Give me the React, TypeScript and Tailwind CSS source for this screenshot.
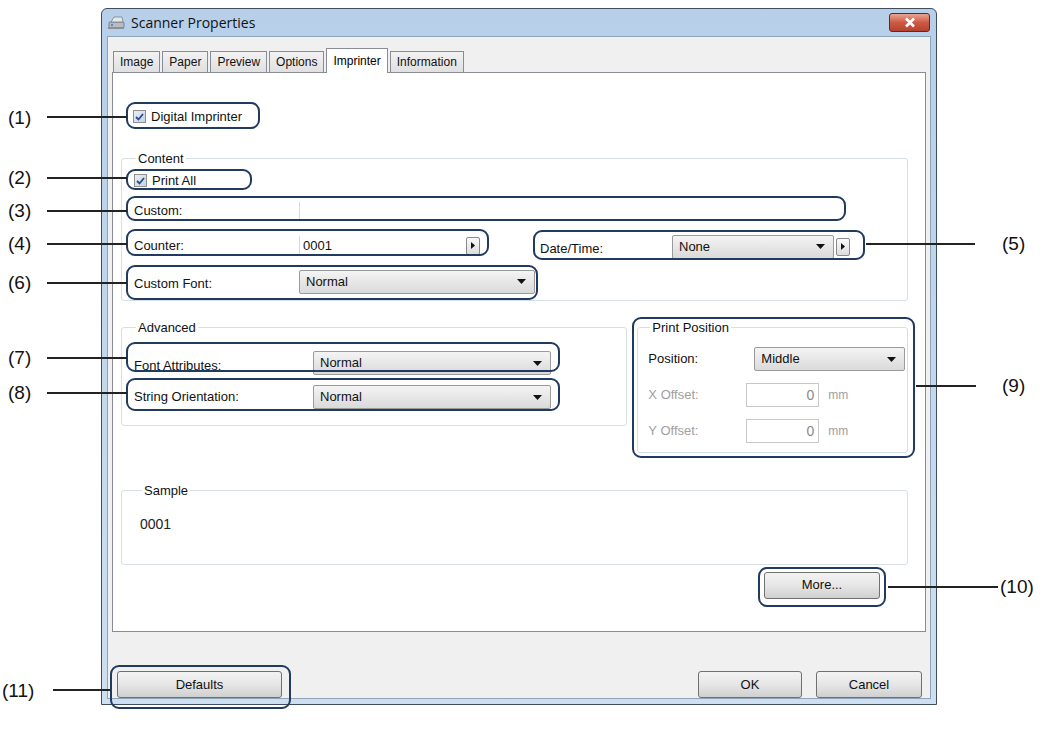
import React from "react"

const font = { fontFamily: '"Liberation Sans", Arial, sans-serif' }

function Caret() {
  return (
    <svg width="9" height="5" viewBox="0 0 9 5" className="shrink-0">
      <path d="M0 0h9L4.5 5z" fill="#111" />
    </svg>
  )
}

function Select({ value, w }: { value: string; w: string }) {
  return (
    <div className={`${w} h-[24px] flex items-center justify-between pl-[6px] pr-[8px] border border-[#9a9a9a] rounded-[2px] bg-gradient-to-b from-[#f4f4f4] to-[#dadada] text-[13px] text-[#111]`}>
      <span>{value}</span>
      <Caret />
    </div>
  )
}

function ArrowBtn() {
  return (
    <div className="w-[14px] h-[18px] flex items-center justify-center border border-[#8a8a8a] rounded-[2px] bg-gradient-to-b from-[#fafafa] to-[#dedede]">
      <svg width="4" height="7" viewBox="0 0 4 7">
        <path d="M0 0l4 3.5L0 7z" fill="#111" />
      </svg>
    </div>
  )
}

function Check({ label }: { label: string }) {
  return (
    <div className="flex items-center gap-[5px] text-[13px] text-[#111]">
      <div className="w-[13px] h-[13px] border border-[#8e8f8f] bg-gradient-to-br from-[#e8eef6] to-[#c6d3e2] flex items-center justify-center">
        <svg width="9" height="8" viewBox="0 0 9 8">
          <path d="M1 4l2.5 2.5L8 1" stroke="#2b4a8b" strokeWidth="1.8" fill="none" />
        </svg>
      </div>
      <span>{label}</span>
    </div>
  )
}

function Btn({ label, w }: { label: string; w: string }) {
  return (
    <div className={`${w} h-[27px] flex items-center justify-center border border-[#707070] rounded-[3px] bg-gradient-to-b from-[#f3f3f3] via-[#e6e6e6] to-[#d0d0d0] text-[13px] text-[#111]`}>
      {label}
    </div>
  )
}

function Group({ title, className, children }: { title: string; className: string; children?: React.ReactNode }) {
  return (
    <fieldset className={`border border-[#d5dfe5] rounded-[3px] ${className}`}>
      <legend className="ml-[2px] px-[2px] text-[13px] text-[#111]">{title}</legend>
      {children}
    </fieldset>
  )
}

const tabs = ["Image", "Paper", "Preview", "Options", "Imprinter", "Information"]

function Callout({ l, t, w, h }: { l: number; t: number; w: number; h: number }) {
  return (
    <div
      className="absolute border-2 border-[#203a60] rounded-[9px]"
      style={{ left: l, top: t, width: w, height: h }}
    />
  )
}

function Tag({ text, x, y }: { text: string; x: number; y: number }) {
  return (
    <div className="absolute text-[19px] text-[#111] leading-none" style={{ left: x, top: y }}>
      {text}
    </div>
  )
}

function Line({ x1, x2, y }: { x1: number; x2: number; y: number }) {
  return <div className="absolute h-[1.5px] bg-[#222]" style={{ left: x1, top: y, width: x2 - x1 }} />
}

export default function App() {
  return (
    <div className="relative w-[1048px] h-[733px] bg-white overflow-hidden" style={font}>
      <div className="ml-[101px] mt-[8px] w-[836px] h-[697px] flex flex-col border border-[#3f4d5c] rounded-t-[6px] bg-gradient-to-b from-[#b7cfe9] to-[#cddff1] px-[5px] pb-[5px]">
        {/* title bar */}
        <div className="h-[31px] flex items-center justify-between">
          <div className="flex items-center gap-[6px]">
            <svg width="18" height="16" viewBox="0 0 18 16">
              <rect x="2" y="7" width="15" height="6" rx="1" fill="#b8bcc2" stroke="#6b7280" strokeWidth="0.8" />
              <path d="M4 7l3-5h8l1 5z" fill="#e4e7ea" stroke="#7a828b" strokeWidth="0.8" />
              <rect x="1" y="12" width="16" height="2" fill="#8a9098" />
              <circle cx="5" cy="10" r="1" fill="#3a7bd5" />
            </svg>
            <span className="text-[14px] text-[#111]" style={{ fontFamily: '"Open Sans", sans-serif' }}>Scanner Properties</span>
          </div>
          <div className="w-[41px] h-[19px] mr-[1px] rounded-[3px] border border-[#5a2a28] bg-gradient-to-b from-[#e9a595] via-[#cc5a44] to-[#b7412f] flex items-center justify-center">
            <svg width="12" height="11" viewBox="0 0 12 11">
              <path d="M2 1.5l8 8M10 1.5l-8 8" stroke="#fff" strokeWidth="2.6" />
            </svg>
          </div>
        </div>
        <div className="flex-1 flex flex-col bg-[#f0f0f0] border border-[#8fa3b8] px-[4px]">
          {/* tabs */}
          <div className="mt-[14px] flex items-end h-[21px] pl-[1px] gap-[2px]">
            {tabs.map((t) =>
              t === "Imprinter" ? (
                <div key={t} className="h-[25px] -mb-[1px] px-[6px] bg-white border border-b-0 border-[#898c95] text-[12px] pt-[3px] relative z-10">
                  {t}
                </div>
              ) : (
                <div key={t} className="h-[21px] px-[6px] flex items-center bg-gradient-to-b from-[#f2f2f2] to-[#e0e0e0] border border-b-0 border-[#898c95] text-[12px] text-[#111]">
                  {t}
                </div>
              )
            )}
          </div>
          {/* panel */}
          <div className="h-[560px] bg-white border border-[#898c95] flex flex-col pl-[8px] pr-[17px]">
            <div className="mt-[34px] pl-[12px]">
              <Check label="Digital Imprinter" />
            </div>
            <Group title="Content" className="mt-[22px] h-[152px] pl-[12px] pr-[8px] text-[13px] text-[#111]">
              <div className="mt-[3px]"><Check label="Print All" /></div>
              <div className="mt-[10px] h-[20px] flex items-center">
                <span className="w-[165px]">Custom:</span>
                <div className="flex-1 h-[18px] border-l border-[#d8d8d8]" />
              </div>
              <div className="mt-[14px] h-[22px] flex items-center">
                <span className="w-[165px]">Counter:</span>
                <div className="w-[188px] h-[20px] border-l border-[#d8d8d8] flex items-center justify-between pl-[3px] pr-[7px]">
                  <span>0001</span>
                  <ArrowBtn />
                </div>
                <span className="ml-[53px] mt-[6px] w-[132px]">Date/Time:</span>
                <div className="mt-[2px] flex items-center gap-[2px]">
                  <Select value="None" w="w-[162px]" />
                  <ArrowBtn />
                </div>
              </div>
              <div className="mt-[12px] h-[26px] flex items-center">
                <span className="w-[165px] mt-[4px]">Custom Font:</span>
                <Select value="Normal" w="w-[236px]" />
              </div>
            </Group>
            <div className="mt-[17px] flex gap-[10px] items-start">
              <Group title="Advanced" className="w-[507px] h-[108px] pl-[12px] text-[13px] text-[#111]">
                <div className="mt-[13px] flex items-center h-[26px]">
                  <span className="w-[179px] mt-[6px]">Font Attributes:</span>
                  <Select value="Normal" w="w-[238px]" />
                </div>
                <div className="mt-[8px] flex items-center h-[26px]">
                  <span className="w-[179px]">String Orientation:</span>
                  <Select value="Normal" w="w-[238px]" />
                </div>
              </Group>
              <Group title="Print Position" className="w-[271px] h-[135px] pl-[10px] text-[13px]">
                <div className="mt-[10px] flex items-center h-[24px] text-[#111]">
                  <span className="w-[106px]">Position:</span>
                  <Select value="Middle" w="w-[151px]" />
                </div>
                {["X Offset:", "Y Offset:"].map((l) => (
                  <div key={l} className="mt-[12px] flex items-center h-[24px] text-[#a0a0a0]">
                    <span className="w-[98px]">{l}</span>
                    <div className="w-[73px] h-[24px] border border-[#c8c8c8] flex items-center justify-end pr-[4px] text-[14px] text-[#888]">0</div>
                    <span className="ml-[9px] text-[12px]">mm</span>
                  </div>
                ))}
              </Group>
            </div>
            <Group title="Sample" className="mt-[28px] h-[84px] pl-[18px] text-[13px]">
              <div className="mt-[14px] text-[14px] text-[#222]">0001</div>
            </Group>
            <div className="mt-[7px] flex justify-end pr-[28px]">
              <Btn label="More..." w="w-[116px]" />
            </div>
          </div>
          <div className="mt-[39px] flex items-center pl-[5px] pr-[4px]">
            <Btn label="Defaults" w="w-[165px]" />
            <div className="flex-1" />
            <Btn label="OK" w="w-[104px]" />
            <div className="w-[14px]" />
            <Btn label="Cancel" w="w-[106px]" />
          </div>
        </div>
      </div>

      {/* annotations */}
      <Callout l={126} t={102} w={134} h={27} />
      <Callout l={126} t={169} w={126} h={21} />
      <Callout l={126} t={196} w={720} h={25} />
      <Callout l={126} t={229} w={363} h={27} />
      <Callout l={533} t={230} w={332} h={30} />
      <Callout l={126} t={265} w={412} h={35} />
      <Callout l={126} t={342} w={434} h={30} />
      <Callout l={126} t={378} w={434} h={33} />
      <Callout l={632} t={317} w={283} h={141} />
      <Callout l={758} t={567} w={128} h={40} />
      <Callout l={110} t={665} w={181} h={44} />

      <Tag text="(1)" x={8} y={108} />
      <Line x1={47} x2={127} y={116} />
      <Tag text="(2)" x={8} y={168} />
      <Line x1={47} x2={127} y={177} />
      <Tag text="(3)" x={8} y={201} />
      <Line x1={47} x2={127} y={210} />
      <Tag text="(4)" x={8} y={234} />
      <Line x1={47} x2={127} y={243} />
      <Tag text="(6)" x={8} y={273} />
      <Line x1={47} x2={127} y={282} />
      <Tag text="(7)" x={8} y={348} />
      <Line x1={47} x2={127} y={357} />
      <Tag text="(8)" x={8} y={383} />
      <Line x1={47} x2={127} y={392} />
      <Tag text="(11)" x={2} y={681} />
      <Line x1={53} x2={110} y={689} />
      <Tag text="(5)" x={1002} y={234} />
      <Line x1={866} x2={975} y={243} />
      <Tag text="(9)" x={1002} y={376} />
      <Line x1={916} x2={976} y={385} />
      <Tag text="(10)" x={1000} y={577} />
      <Line x1={888} x2={998} y={586} />
    </div>
  )
}
